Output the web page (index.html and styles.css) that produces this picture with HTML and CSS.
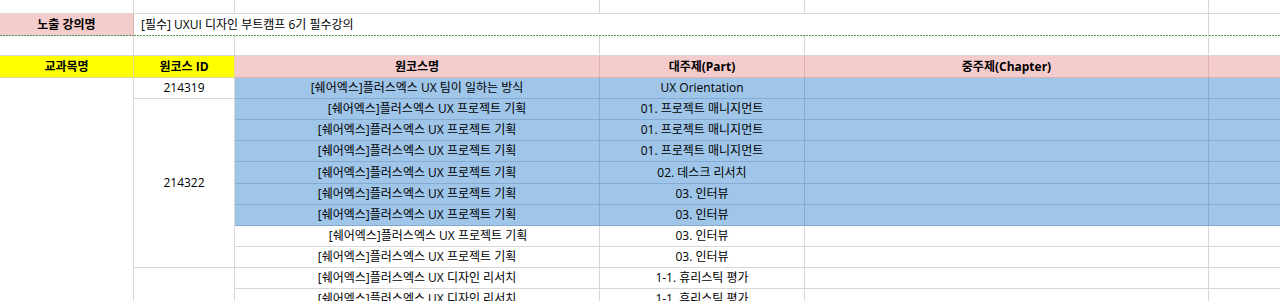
FILE: index.html
```html
<!DOCTYPE html>
<html lang="ko">
<head>
<meta charset="utf-8">
<title>강의 목록</title>
<link rel="stylesheet" href="styles.css">
</head>
<body>
<div class="sheet">
  <!-- row 1 -->
  <div class="c"></div><div class="c"></div><div class="c"></div><div class="c"></div><div class="c"></div><div class="c f"></div>
  <!-- row 2 -->
  <div class="c pink b dash">노출 강의명</div>
  <div class="c over dash">[필수] UXUI 디자인 부트캠프 6기 필수강의</div>
  <div class="c f dash"></div>
  <!-- row 3 -->
  <div class="c"></div><div class="c"></div><div class="c"></div><div class="c"></div><div class="c"></div><div class="c f"></div>
  <!-- header -->
  <div class="c yel b">교과목명</div>
  <div class="c yel b">원코스 ID</div>
  <div class="c pink b">원코스명</div>
  <div class="c pink b">대주제(Part)</div>
  <div class="c pink b">중주제(Chapter)</div>
  <div class="c pink f"></div>
  <!-- data -->
  <div class="c span-a"></div>
  <div class="c">214319</div>
  <div class="c blue">[쉐어엑스]플러스엑스 UX 팀이 일하는 방식</div>
  <div class="c blue">UX Orientation</div>
  <div class="c blue"></div>
  <div class="c blue f"></div>

  <div class="c span-b">214322</div>
  <div class="c blue lead">[쉐어엑스]플러스엑스 UX 프로젝트 기획</div>
  <div class="c blue">01. 프로젝트 매니지먼트</div>
  <div class="c blue"></div>
  <div class="c blue f"></div>

  <div class="c blue">[쉐어엑스]플러스엑스 UX 프로젝트 기획</div>
  <div class="c blue">01. 프로젝트 매니지먼트</div>
  <div class="c blue"></div>
  <div class="c blue f"></div>

  <div class="c blue">[쉐어엑스]플러스엑스 UX 프로젝트 기획</div>
  <div class="c blue">01. 프로젝트 매니지먼트</div>
  <div class="c blue"></div>
  <div class="c blue f"></div>

  <div class="c blue">[쉐어엑스]플러스엑스 UX 프로젝트 기획</div>
  <div class="c blue">02. 데스크 리서치</div>
  <div class="c blue"></div>
  <div class="c blue f"></div>

  <div class="c blue">[쉐어엑스]플러스엑스 UX 프로젝트 기획</div>
  <div class="c blue">03. 인터뷰</div>
  <div class="c blue"></div>
  <div class="c blue f"></div>

  <div class="c blue">[쉐어엑스]플러스엑스 UX 프로젝트 기획</div>
  <div class="c blue">03. 인터뷰</div>
  <div class="c blue"></div>
  <div class="c blue f"></div>

  <div class="c lead2">[쉐어엑스]플러스엑스 UX 프로젝트 기획</div>
  <div class="c">03. 인터뷰</div>
  <div class="c"></div>
  <div class="c f"></div>

  <div class="c">[쉐어엑스]플러스엑스 UX 프로젝트 기획</div>
  <div class="c">03. 인터뷰</div>
  <div class="c"></div>
  <div class="c f"></div>

  <div class="c span-c"></div>
  <div class="c">[쉐어엑스]플러스엑스 UX 디자인 리서치</div>
  <div class="c">1-1. 휴리스틱 평가</div>
  <div class="c"></div>
  <div class="c f"></div>

  <div class="c">[쉐어엑스]플러스엑스 UX 디자인 리서치</div>
  <div class="c">1-1. 휴리스틱 평가</div>
  <div class="c"></div>
  <div class="c f"></div>
</div>
</body>
</html>
```
FILE: styles.css
```css
html, body {
  margin: 0;
  padding: 0;
  background: #ffffff;
  overflow: hidden;
}

body {
  font-family: "Open Sans", "Noto Sans CJK KR", sans-serif;
  font-size: 12px;
  color: #000000;
}

.sheet {
  display: grid;
  grid-template-columns: 134px 101px 365px 205px 404px 71px;
  grid-template-rows: 14px 22px 20px 22px 21px 21px 21px 21px 22px 21px 21px 21px 21px 21px 21px;
}

.c {
  box-sizing: border-box;
  border-right: 1px solid #d8d8d8;
  border-bottom: 1px solid #d8d8d8;
  display: flex;
  align-items: center;
  justify-content: center;
  white-space: nowrap;
  overflow: hidden;
  line-height: 1;
}

.f {
  border-right: none;
}

.b {
  font-weight: 700;
}

.pink {
  background-color: #f4cccc;
  border-color: #dfb0b0;
}

.yel {
  background-color: #ffff00;
  border-color: #dcdc9a;
}

.blue {
  background-color: #9fc5e8;
  border-color: #86aad0;
}

.over {
  grid-column: span 4;
  justify-content: flex-start;
  padding-left: 7px;
  border-right: 1px solid #d8d8d8;
}

.dash {
  border-bottom: none;
  background-image: repeating-linear-gradient(90deg, #4b9a5c 0 2px, transparent 2px 3px);
  background-size: 100% 1px;
  background-position: left bottom;
  background-repeat: no-repeat;
}

.span-a {
  grid-row: span 11;
  border-bottom: none;
}

.span-b {
  grid-row: span 8;
}

.span-c {
  grid-row: span 2;
  border-bottom: none;
}

.lead {
  padding-left: 20px;
}

.lead2 {
  padding-left: 22px;
}
```
